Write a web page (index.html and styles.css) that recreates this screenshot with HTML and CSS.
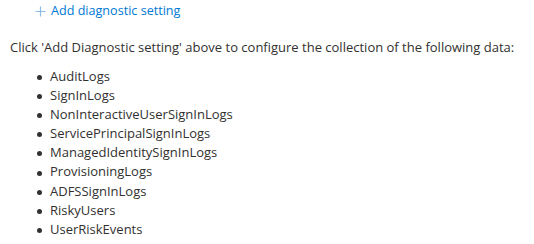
FILE: index.html
```html
<!DOCTYPE html>
<html>
<head>
<meta charset="utf-8">
<link rel="stylesheet" href="styles.css">
</head>
<body>
<div class="page">
  <div class="add-row">
    <svg class="plus" width="11" height="11" viewBox="0 0 11 11"><path d="M5.5 0.5v10M0.5 5.5h10" stroke="#8cbbe8" stroke-width="1.2" fill="none"/></svg>
    <a class="add-link">Add diagnostic setting</a>
  </div>
  <p class="intro">Click 'Add Diagnostic setting' above to configure the collection of the following data:</p>
  <ul class="logs">
    <li>AuditLogs</li>
    <li>SignInLogs</li>
    <li>NonInteractiveUserSignInLogs</li>
    <li>ServicePrincipalSignInLogs</li>
    <li>ManagedIdentitySignInLogs</li>
    <li>ProvisioningLogs</li>
    <li>ADFSSignInLogs</li>
    <li>RiskyUsers</li>
    <li>UserRiskEvents</li>
  </ul>
</div>
</body>
</html>
```
FILE: styles.css
```css
html, body {
  margin: 0;
  padding: 0;
  background: #ffffff;
}
.page {
  font-family: "Open Sans", "Noto Sans", sans-serif;
  font-size: 13px;
  color: #323130;
  padding: 0 0 0 10px;
}
.add-row {
  display: flex;
  align-items: center;
  gap: 5px;
  padding-left: 25px;
  height: 22px;
}
.plus {
  display: block;
  flex: none;
}
.add-link {
  color: #0078d4;
  font-size: 12.6px;
  line-height: 18px;
}
.intro {
  margin: 16px 0 0 0;
  line-height: 19px;
}
.logs {
  list-style: none;
  margin: 10px 0 0 0;
  padding-left: 27px;
  line-height: 19.1px;
}
.logs li {
  display: flex;
  align-items: center;
  gap: 8px;
}
.logs li::before {
  content: "";
  width: 5px;
  height: 5px;
  border-radius: 50%;
  background: #323130;
  flex: none;
  margin-top: 2px;
}
```
